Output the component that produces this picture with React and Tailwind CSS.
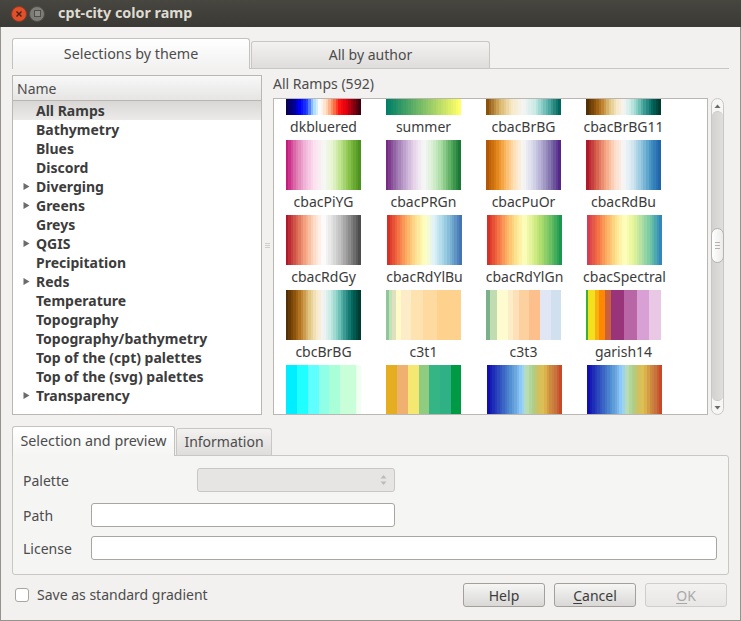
import React from 'react';

const themes = [
    { name: 'All Ramps', selected: true },
    { name: 'Bathymetry' },
    { name: 'Blues' },
    { name: 'Discord' },
    { name: 'Diverging', arrow: true },
    { name: 'Greens', arrow: true },
    { name: 'Greys' },
    { name: 'QGIS', arrow: true },
    { name: 'Precipitation' },
    { name: 'Reds', arrow: true },
    { name: 'Temperature' },
    { name: 'Topography' },
    { name: 'Topography/bathymetry' },
    { name: 'Top of the (cpt) palettes' },
    { name: 'Top of the (svg) palettes' },
    { name: 'Transparency', arrow: true },
];

const brbg11 = ['#543005', '#8c510a', '#bf812d', '#dfc27d', '#f6e8c3', '#f5f5f5', '#c7eae5', '#80cdc1', '#35978f', '#01665e', '#003c30'];
const bluered = ['#1010b0', '#2030b8', '#3050c0', '#4070c8', '#5090d0', '#70a8e0', '#90d0ff', '#c0e0b0', '#a8d090', '#d0c060', '#e0c050', '#d09040', '#c87840', '#c84a28'];

// bands: [colour, end %] gives hard edges, plain colours get cut into even steps
const ramps = [
    { name: 'dkbluered', colors: ['#0a0050', '#000090', '#0000ff', '#2040ff', '#a0d8ff', '#ffffff', '#ffd8b8', '#ff8050', '#ff1010', '#e00010', '#900010', '#400010'] },
    { name: 'summer', colors: ['#008066', '#ffff66'] },
    { name: 'cbacBrBG', colors: ['#8c510a', '#d8b365', '#f6e8c3', '#f5f5f5', '#c7eae5', '#5ab4ac', '#01665e'] },
    { name: 'cbacBrBG11', colors: brbg11 },
    { name: 'cbacPiYG', colors: ['#c51b7d', '#de77ae', '#f1b6da', '#fde0ef', '#f7f7f7', '#e6f5d0', '#b8e186', '#7fbc41', '#4d9221'] },
    { name: 'cbacPRGn', colors: ['#762a83', '#9970ab', '#c2a5cf', '#e7d4e8', '#f7f7f7', '#d9f0d3', '#a6dba0', '#5aae61', '#1b7837'] },
    { name: 'cbacPuOr', colors: ['#b35806', '#e08214', '#fdb863', '#fee0b6', '#f7f7f7', '#d8daeb', '#b2abd2', '#8073ac', '#542788'] },
    { name: 'cbacRdBu', colors: ['#b2182b', '#d6604d', '#f4a582', '#fddbc7', '#f7f7f7', '#d1e5f0', '#92c5de', '#4393c3', '#2166ac'] },
    { name: 'cbacRdGy', colors: ['#b2182b', '#d6604d', '#f4a582', '#fddbc7', '#ffffff', '#e0e0e0', '#bababa', '#878787', '#4d4d4d'] },
    { name: 'cbacRdYlBu', shift: 'ml-px', colors: ['#d73027', '#f46d43', '#fdae61', '#fee090', '#ffffbf', '#e0f3f8', '#abd9e9', '#74add1', '#4575b4'] },
    { name: 'cbacRdYlGn', shift: 'ml-px', colors: ['#d73027', '#f46d43', '#fdae61', '#fee08b', '#ffffbf', '#d9ef8b', '#a6d96a', '#66bd63', '#1a9850'] },
    { name: 'cbacSpectral', shift: 'ml-px', colors: ['#d53e4f', '#f46d43', '#fdae61', '#fee08b', '#ffffbf', '#e6f598', '#abdda4', '#66c2a5', '#3288bd'] },
    { name: 'cbcBrBG', colors: brbg11 },
    { name: 'c3t1', bands: [['#8fc79a', 4], ['#c0e2b5', 8], ['#dfe0c0', 13], ['#fffac8', 20], ['#fdecc8', 33], ['#fee2b0', 50], ['#fed9a0', 68], ['#fed28c', 100]] },
    { name: 'c3t3', bands: [['#7ab08a', 5], ['#c0dcb0', 15], ['#fffbd0', 29], ['#fdecc8', 36], ['#fde0b8', 44], ['#fdd0a0', 57], ['#fdc08c', 72], ['#e0e6f3', 87], ['#d0e0ee', 100]] },
    { name: 'garish14', bands: [['#3cb034', 3], ['#f5e020', 12], ['#f8b010', 17], ['#ff8800', 25], ['#c96040', 33], ['#99347a', 51], ['#b866a6', 68], ['#d8a0d4', 84], ['#e8c8e4', 100]] },
    { name: 'cyan', noLabel: true, bands: [['#00eeff', 15], ['#20ffff', 29], ['#60ffff', 44], ['#90ffe8', 58], ['#a8ffd8', 72], ['#c8ffd8', 93], ['#f0fff0', 100]] },
    { name: 'sand', noLabel: true, bands: [['#e5ad20', 15], ['#f0b070', 29], ['#f5e870', 44], ['#90cc80', 57], ['#35b585', 72], ['#30b085', 87], ['#009a44', 100]] },
    { name: 'bluered1', noLabel: true, shift: 'ml-px', colors: bluered },
    { name: 'bluered2', noLabel: true, shift: 'ml-px', colors: bluered },
];

const hexToRgb = (hex) => [1, 3, 5].map((i) => parseInt(hex.slice(i, i + 2), 16));

const stepColors = (colors, count) => {
    const out = [];
    for (let i = 0; i < count; i++) {
        const pos = (i / (count - 1)) * (colors.length - 1);
        const at = Math.min(Math.floor(pos), colors.length - 2);
        const a = hexToRgb(colors[at]);
        const b = hexToRgb(colors[at + 1]);
        const c = a.map((v, k) => Math.round(v + (b[k] - v) * (pos - at)));
        out.push([`rgb(${c.join(',')})`, ((i + 1) / count) * 100]);
    }
    return out;
};

const rampBackground = (ramp) => {
    const bands = ramp.bands || stepColors(ramp.colors, 30);
    let from = 0;
    const stops = bands.map(([color, end]) => {
        const stop = `${color} ${from}% ${end}%`;
        from = end;
        return stop;
    });
    return `linear-gradient(to right, ${stops.join(', ')})`;
};

const Arrow = () => (
    <svg width="7" height="9" viewBox="0 0 7 9" className="shrink-0">
        <polygon points="0.5,1 6.5,4.5 0.5,8" fill="#6b6b6b" />
    </svg>
);

const ThemeTree = () => (
    <div className="w-[250px] h-[340px] shrink-0 bg-white border border-[#bab7b2] flex flex-col">
        <div className="h-[25px] shrink-0 pl-[4px] pt-[2px] flex items-center bg-gradient-to-b from-[#f8f8f8] to-[#e6e5e4] border-b border-[#bab7b2] text-[#4c4c4c]">
            Name
        </div>
        {themes.map((t) => (
            <div
                key={t.name}
                className={`h-[19px] shrink-0 flex items-center font-bold text-[#3c3c3c] ${t.selected ? 'bg-gradient-to-b from-[#d8d7d6] to-[#ecebea]' : ''}`}
            >
                <div className="w-[23px] pl-[10px] shrink-0 flex items-center">{t.arrow && <Arrow />}</div>
                {t.name}
            </div>
        ))}
    </div>
);

const RampList = () => (
    <div className="flex-1 h-[317px] bg-white border border-[#bab7b2] overflow-hidden">
        <div className="-mt-[34px] ml-[12px] grid grid-cols-[100px_100px_100px_100px] auto-rows-[75px]">
            {ramps.map((r) => (
                <div key={r.name} className={`w-[75px] ${r.shift || ''}`}>
                    <div className="w-[75px] h-[50px]" style={{ background: rampBackground(r) }} />
                    {!r.noLabel && (
                        <div className="h-[23px] flex justify-center items-center whitespace-nowrap text-[#3c3c3c]">{r.name}</div>
                    )}
                </div>
            ))}
        </div>
    </div>
);

const Scrollbar = () => (
    <div className="relative w-[13px] h-[317px] ml-[3px] shrink-0 rounded-full border border-[#c9c7c3] bg-[#f6f6f5] flex flex-col items-center">
        <svg width="7" height="5" viewBox="0 0 7 5" className="mt-[5px] shrink-0">
            <polygon points="3.5,0.5 6.5,4 0.5,4" fill="#6b6b6b" />
        </svg>
        <div className="mt-[2px] w-full flex-1 rounded-full bg-gradient-to-r from-[#d2d1cf] to-[#e0dfde] border-y border-[#c9c7c3]" />
        <svg width="7" height="5" viewBox="0 0 7 5" className="my-[4px] shrink-0">
            <polygon points="3.5,4.5 6.5,1 0.5,1" fill="#6b6b6b" />
        </svg>
        <div className="absolute top-[129px] -left-px w-[13px] h-[35px] rounded-full border border-[#b5b3af] bg-gradient-to-r from-[#ffffff] to-[#ecebea] flex flex-col items-center justify-center gap-[2px]">
            <div className="w-[5px] h-px bg-[#b5b3af]" />
            <div className="w-[5px] h-px bg-[#b5b3af]" />
            <div className="w-[5px] h-px bg-[#b5b3af]" />
        </div>
    </div>
);

const Field = ({ label, children }) => (
    <div className="flex items-center h-[24px]">
        <div className="w-[68px] shrink-0 pt-[2px]">{label}</div>
        {children}
    </div>
);

const Button = ({ children, disabled }) => (
    <button
        className={`w-[82px] h-[24px] pt-px rounded-[3px] border flex items-center justify-center bg-gradient-to-b ${disabled ? 'border-[#d0cecb] from-[#f3f2f1] to-[#e8e7e6] text-[#a8a8a8]' : 'border-[#a3a09b] from-[#f6f6f5] to-[#d9d8d6] text-[#3c3c3c]'}`}
    >
        {children}
    </button>
);

const App = () => (
    <div className="w-[741px] h-[621px] flex flex-col bg-[#f2f1f0] text-[14px] leading-none text-[#4c4c4c] font-['Noto_Sans',sans-serif]">
        <div className="h-[27px] shrink-0 flex items-center bg-gradient-to-b from-[#47463f] to-[#3a3935] pl-[11px]">
            <div className="w-[16px] h-[16px] rounded-full bg-[#e0502a] border border-[#8c3a20] flex items-center justify-center">
                <svg width="8" height="8" viewBox="0 0 8 8">
                    <path d="M1.5 1.5 L6.5 6.5 M6.5 1.5 L1.5 6.5" stroke="#4a2015" strokeWidth="1.4" />
                </svg>
            </div>
            <div className="ml-[2px] w-[16px] h-[16px] rounded-full bg-[#7d7c76] border border-[#4f4e4a] flex items-center justify-center">
                <div className="w-[7px] h-[7px] border border-[#4f4e4a] bg-[#8c8b85]" />
            </div>
            <div className="ml-[13px] text-[14.3px] font-bold text-[#dfdbd2]">cpt-city color ramp</div>
        </div>

        <div className="flex-1 flex flex-col px-[11px] border-x border-b border-[#96938e]">
            <div className="mt-[12px] h-[30px] flex items-end border-b border-[#c9c7c3] shrink-0">
                <div className="w-[238px] h-[31px] -mb-px rounded-t-[3px] border border-b-0 border-[#c4c2bd] bg-gradient-to-b from-[#ffffff] to-[#f2f1f0] flex items-center justify-center text-[14.3px] text-[#4c4c4c]">
                    Selections by theme
                </div>
                <div className="w-[239px] h-[27px] ml-px rounded-t-[3px] border border-b-0 border-[#c9c7c3] bg-gradient-to-b from-[#f3f2f1] to-[#dedddb] flex items-center justify-center">
                    All by author
                </div>
            </div>

            <div className="mt-[6px] flex h-[340px] shrink-0">
                <ThemeTree />
                <div className="w-[11px] shrink-0 flex flex-col items-center justify-center gap-px">
                    <div className="w-[5px] h-px bg-[#cfcdc9]" />
                    <div className="w-[5px] h-px bg-[#cfcdc9]" />
                    <div className="w-[5px] h-px bg-[#cfcdc9]" />
                </div>
                <div className="flex-1 flex flex-col pr-[5px]">
                    <div className="h-[23px] flex items-center pb-[6px]">All Ramps (592)</div>
                    <div className="flex">
                        <RampList />
                        <Scrollbar />
                    </div>
                </div>
            </div>

            <div className="mt-[11px] h-[30px] flex items-end shrink-0 relative z-10">
                <div className="w-[163px] h-[30px] rounded-t-[3px] border border-b-0 border-[#c4c2bd] bg-gradient-to-b from-[#ffffff] to-[#f5f5f4] flex items-center justify-center text-[14.3px]">
                    Selection and preview
                </div>
                <div className="w-[96px] h-[27px] ml-px mb-px rounded-t-[3px] border border-b-0 border-[#c9c7c3] bg-gradient-to-b from-[#f3f2f1] to-[#dedddb] flex items-center justify-center">
                    Information
                </div>
            </div>
            <div className="-mt-px h-[120px] shrink-0 rounded-b-[3px] rounded-tr-[3px] border border-[#c9c7c3] bg-[#f5f5f4] pl-[10px] pr-[11px] pt-[12px] flex flex-col">
                <div className="flex items-center h-[24px]">
                    <div className="w-[174px] shrink-0 pt-[2px]">Palette</div>
                    <div className="w-[198px] h-[24px] rounded-[3px] border border-[#c9c7c3] bg-[#e6e5e4] flex items-center justify-end pr-[7px]">
                        <svg width="7" height="14" viewBox="0 0 7 14">
                            <polygon points="3.5,2 6.5,5.5 0.5,5.5" fill="#bdbcba" />
                            <polygon points="3.5,12 6.5,8.5 0.5,8.5" fill="#bdbcba" />
                        </svg>
                    </div>
                </div>
                <div className="mt-[11px]">
                    <Field label="Path">
                        <div className="w-[304px] h-[24px] rounded-[3px] border border-[#a9a6a1] bg-white" />
                    </Field>
                </div>
                <div className="mt-[9px]">
                    <Field label="License">
                        <div className="flex-1 h-[24px] rounded-[3px] border border-[#a9a6a1] bg-white" />
                    </Field>
                </div>
            </div>

            <div className="mt-[8px] flex items-center pl-[3px] pr-[2px]">
                <div className="w-[14px] h-[14px] rounded-[3px] border border-[#a9a6a1] bg-white shrink-0" />
                <div className="ml-[8px]">Save as standard gradient</div>
                <div className="ml-auto flex gap-[9px]">
                    <Button>Help</Button>
                    <Button><span className="underline underline-offset-2">C</span>ancel</Button>
                    <Button disabled><span className="underline underline-offset-2">O</span>K</Button>
                </div>
            </div>
        </div>
    </div>
);

export default App;
